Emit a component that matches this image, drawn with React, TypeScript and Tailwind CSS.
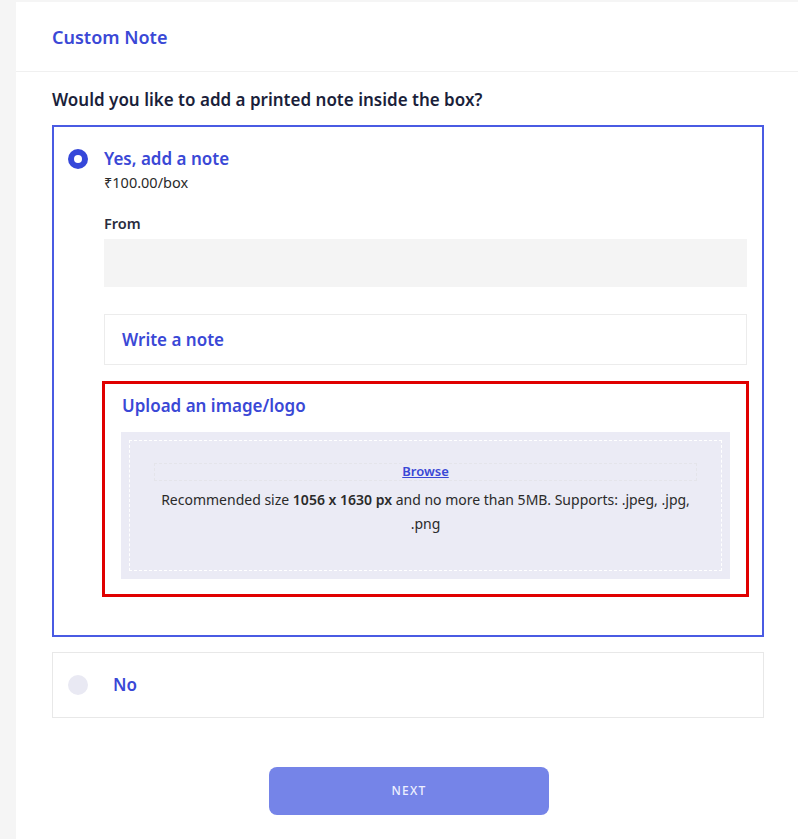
import React from "react";

export default function App() {
  return (
    <div className="min-h-[839px] w-[798px] bg-[#f5f5f5] pl-4 pt-[2px]" style={{ fontFamily: "'Noto Sans', sans-serif" }}>
      <div className="min-h-[837px] bg-white">
        <div className="flex h-[70px] items-center border-b border-[#f0f0f0] pl-9">
          <h2 className="mt-[2px] text-[18px] font-semibold text-[#3a48d6]">Custom Note</h2>
        </div>
        <div className="pl-9 pr-[34px]">
          <p className="mt-[16px] text-[17px] font-semibold leading-6 text-[#1b1f3b]">
            Would you like to add a printed note inside the box?
          </p>
          <div className="mt-[13px] border-2 border-[#4a5be3] pb-[38px] pl-[14px] pr-[15px] pt-[20px]">
            <div className="flex gap-4">
              <div className="mt-[2px] flex h-5 w-5 shrink-0 items-center justify-center rounded-full bg-[#3547d9]">
                <div className="h-2 w-2 rounded-full bg-white" />
              </div>
              <div className="flex-1">
                <div className="text-[17px] font-semibold leading-6 text-[#3a48d6]">Yes, add a note</div>
                <div className="mt-[1px] text-[14.5px] leading-5 text-[#2a2a2a]">₹100.00/box</div>
                <div className="mt-[21px] text-[14.5px] font-semibold leading-5 text-[#2a2d3e]">From</div>
                <div className="mt-[6px] h-12 bg-[#f4f4f4]" />
                <div className="mt-[27px] flex h-[51px] items-center border border-[#ececec] pl-[17px]">
                  <span className="text-[17px] font-semibold text-[#3a48d6]">Write a note</span>
                </div>
                <div className="mt-4 ml-[-2px] mr-[-2px] border-[3px] border-[#e00000] pb-[15px] pl-4 pr-4 pt-[10px]">
                  <div className="pl-[1px] text-[17px] font-semibold leading-6 text-[#3a48d6]">Upload an image/logo</div>
                  <div className="mt-[14px] bg-[#ebebf5] p-2">
                    <div className="border border-dashed border-white px-6 pb-[34px] pt-[22px]">
                      <div className="flex h-[18px] items-center justify-center border border-dashed border-[#e4e4ea]">
                        <span className="text-[13px] font-semibold text-[#3a48d6] underline">Browse</span>
                      </div>
                      <p className="mt-[7px] text-center text-[14px] leading-6 text-[#2a2a2a]">
                        Recommended size <span className="font-semibold">1056 x 1630 px</span> and no more than 5MB. Supports: .jpeg, .jpg, .png
                      </p>
                    </div>
                  </div>
                </div>
              </div>
            </div>
          </div>
          <div className="mt-[15px] flex h-[66px] items-center border border-[#e8e8e8] pl-[15px]">
            <div className="h-5 w-5 rounded-full bg-[#e9e9f3]" />
            <span className="ml-[25px] text-[17px] font-semibold text-[#3a48d6]">No</span>
          </div>
          <div className="mt-[49px] flex justify-center pl-[2px]">
            <button className="h-12 w-[280px] rounded-lg bg-[#7584e8] text-[12px] font-medium tracking-[0.1em] text-[#eef0ff]">
              NEXT
            </button>
          </div>
        </div>
      </div>
    </div>
  );
}
